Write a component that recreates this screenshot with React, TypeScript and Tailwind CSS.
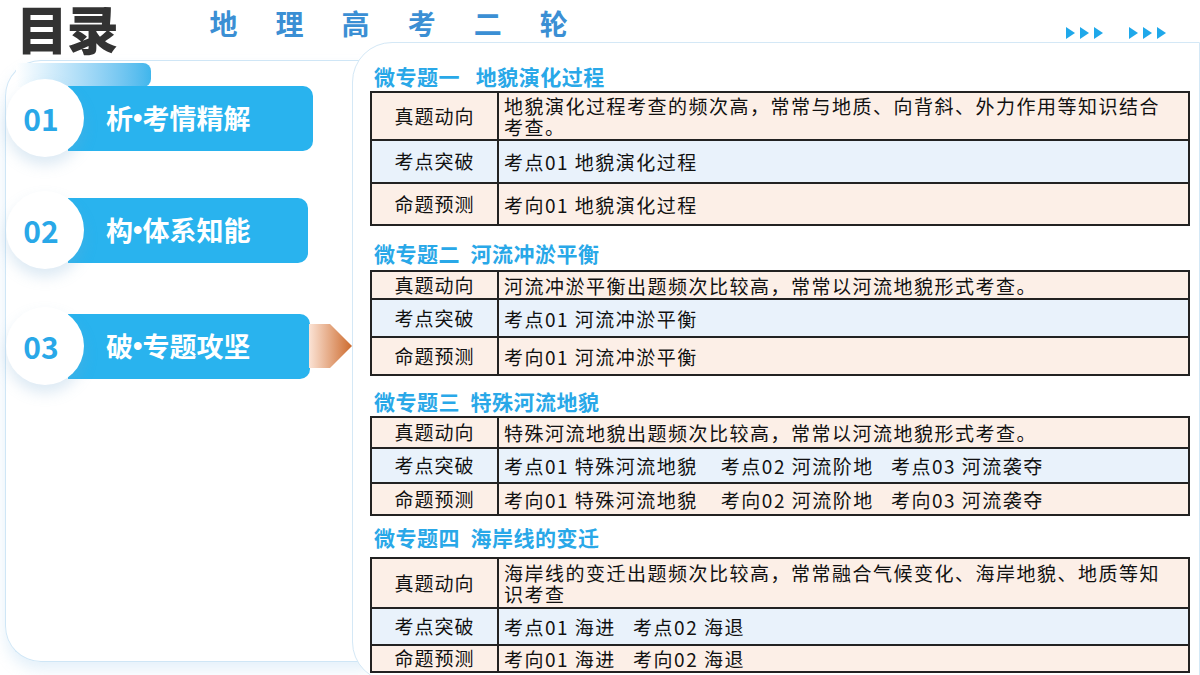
import React from "react";

const F = { fontFamily: '"Noto Sans CJK SC","Noto Sans",sans-serif' };

type Row = { h: number; label: string; text: string; bg: string };
const sections: { title: string; mt: number; tmt: number; rows: Row[] }[] = [
  { title: "微专题一   地貌演化过程", mt: 20, tmt: 2, rows: [
    { h: 48, label: "真题动向", text: "地貌演化过程考查的频次高，常常与地质、向背斜、外力作用等知识结合考查。", bg: "bg-[#fcefe7]" },
    { h: 43, label: "考点突破", text: "考点01 地貌演化过程", bg: "bg-[#e9f2fb]" },
    { h: 42, label: "命题预测", text: "考向01 地貌演化过程", bg: "bg-[#fcefe7]" },
  ]},
  { title: "微专题二  河流冲淤平衡", mt: 14, tmt: 4, rows: [
    { h: 28, label: "真题动向", text: "河流冲淤平衡出题频次比较高，常常以河流地貌形式考查。", bg: "bg-[#fcefe7]" },
    { h: 38, label: "考点突破", text: "考点01 河流冲淤平衡", bg: "bg-[#e9f2fb]" },
    { h: 38, label: "命题预测", text: "考向01 河流冲淤平衡", bg: "bg-[#fcefe7]" },
  ]},
  { title: "微专题三  特殊河流地貌", mt: 12, tmt: 2, rows: [
    { h: 31, label: "真题动向", text: "特殊河流地貌出题频次比较高，常常以河流地貌形式考查。", bg: "bg-[#fcefe7]" },
    { h: 35, label: "考点突破", text: "考点01 特殊河流地貌    考点02 河流阶地   考点03 河流袭夺", bg: "bg-[#e9f2fb]" },
    { h: 32, label: "命题预测", text: "考向01 特殊河流地貌    考向02 河流阶地   考向03 河流袭夺", bg: "bg-[#fcefe7]" },
  ]},
  { title: "微专题四  海岸线的变迁", mt: 8, tmt: 7, rows: [
    { h: 50, label: "真题动向", text: "海岸线的变迁出题频次比较高，常常融合气候变化、海岸地貌、地质等知识考查", bg: "bg-[#fcefe7]" },
    { h: 37, label: "考点突破", text: "考点01 海进   考点02 海退", bg: "bg-[#e9f2fb]" },
    { h: 27, label: "命题预测", text: "考向01 海进   考向02 海退", bg: "bg-[#fcefe7]" },
  ]},
];

function Tri() {
  return (
    <div className="flex gap-[5px]">
      {[0, 1, 2].map((i) => (
        <svg key={i} width="9" height="12" viewBox="0 0 9 12"><path d="M0 0L9 6L0 12Z" fill="#1fa8ea" /></svg>
      ))}
    </div>
  );
}

function Btn({ n, a, b, w, mt, arrow }: { n: string; a: string; b: string; w: number; mt: number; arrow?: boolean }) {
  return (
    <div className="relative flex items-center" style={{ marginTop: mt }}>
      <div className="relative z-10 w-[78px] h-[78px] rounded-full bg-white shadow-[0_8px_14px_rgba(120,170,210,0.25)] flex items-center justify-center text-[#29a8e8] text-[30px] font-bold -mr-[16px]" style={{ ...F, marginLeft: 0 }}>
        <span className="-ml-2">{n}</span>
      </div>
      <div className="h-[65px] rounded-r-[10px] bg-[#29b3ee] flex items-center text-white text-[27px] font-bold pl-[38px]" style={{ ...F, width: w }}>
        {a}<span style={{ fontFamily: '"Liberation Sans",sans-serif' }}>•</span>{b}
      </div>
      {arrow && (
        <svg width="44" height="48" viewBox="0 0 44 48" className="-ml-px">
          <defs>
            <linearGradient id="ag" x1="0" x2="1">
              <stop offset="0" stopColor="#fbe3d5" />
              <stop offset="1" stopColor="#cd6b2e" />
            </linearGradient>
          </defs>
          <path d="M0 2H21L43 24L21 46H0Z" fill="url(#ag)" />
        </svg>
      )}
    </div>
  );
}

export default function App() {
  return (
    <div className="w-[1200px] h-[675px] bg-white overflow-hidden relative" style={F}>
      <div className="flex items-start h-[44px]">
        <div className="text-[52px] font-black text-[#333] leading-[60px] ml-[16px] -mt-[2px] tracking-tight">目录</div>
        <div className="text-[28px] font-bold text-[#3b8fd4] tracking-[1.36em] ml-[92px] mt-[6px] leading-[34px] whitespace-nowrap">地理高考二轮</div>
        <div className="ml-auto mr-[34px] mt-[27px] flex gap-[26px]"><Tri /><Tri /></div>
      </div>
      <div className="flex">
        <div className="w-[365px] shrink-0 mt-[16px] ml-[5px] h-[602px] rounded-bl-[36px] rounded-tl-[36px] border border-[#cfe6f6] border-r-0 shadow-[0_8px_14px_rgba(150,200,235,0.25)] relative">
          <div className="ml-[10px] mt-[2px] w-[135px] h-[24px] rounded-r-[8px] bg-gradient-to-r from-white to-[#3fb6ec]" />
          <Btn n="01" a="析" b="考情精解" w={245} mt={-8} />
          <Btn n="02" a="构" b="体系知能" w={240} mt={34} />
          <Btn n="03" a="破" b="专题攻坚" w={242} mt={38} arrow />
        </div>
        <div className="-ml-[18px] -mt-[2px] flex-1 h-[640px] rounded-tl-[40px] rounded-bl-[40px] border border-[#d4e8f6] bg-white relative z-20 pl-[17px] pr-[9px]">
          {sections.map((s, si) => (
            <div key={si} style={{ marginTop: s.mt }}>
              <div className="text-[21px] font-bold text-[#29a8e8] leading-[26px] whitespace-pre ml-[4px] tracking-[0.5px]">{s.title}</div>
              <div className="border-2 border-[#222] border-b-0" style={{ marginTop: s.tmt }}>
                {s.rows.map((r, ri) => (
                  <div key={ri} className={`flex border-b-2 border-[#222] ${r.bg}`} style={{ height: r.h }}>
                    <div className="w-[127px] shrink-0 border-r-2 border-[#222] flex items-center justify-center text-[19px] tracking-[1px] text-[#111]">{r.label}</div>
                    <div className="flex-1 flex items-center pl-[5px] pr-2 text-[19px] tracking-[1.5px] leading-[21px] text-[#111] whitespace-pre-wrap">{r.text}</div>
                  </div>
                ))}
              </div>
            </div>
          ))}
        </div>
      </div>
    </div>
  );
}
